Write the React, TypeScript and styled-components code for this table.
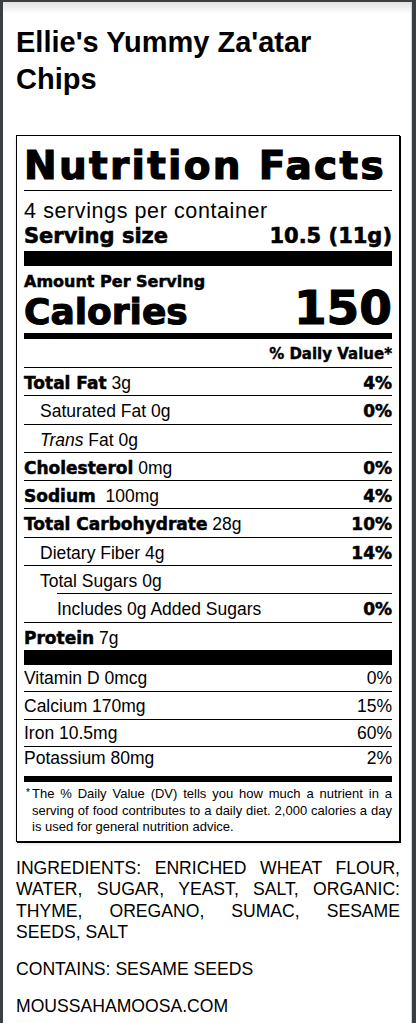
import React from 'react';
import styled, { createGlobalStyle } from 'styled-components';

const heavy = `"DejaVu Sans", "Liberation Sans", Arial, sans-serif`;
const plain = `"Liberation Sans", Arial, Helvetica, sans-serif`;

const GlobalStyle = createGlobalStyle`
  html, body {
    margin: 0;
    padding: 0;
  }
  body {
    background: #3c3f42;
    font-family: ${plain};
    color: #000;
  }
`;

const Sheet = styled.div`
  margin: 2px 4px 0 3px;
  min-height: calc(100vh - 2px);
  box-sizing: border-box;
  padding: 1px 11px 20px 13px;
  background: linear-gradient(#e2e2e2, #fff 12px);
  border-right: 1px solid #d6d6d6;
`;

const ProductTitle = styled.h1`
  margin: 21px 0 0;
  max-width: 330px;
  font-size: 29px;
  line-height: 37px;
  font-weight: 700;
`;

const Label = styled.section`
  margin-top: 37px;
  border: 1px solid #000;
  box-shadow: 1px 1px 0 #000, 0 2px 3px rgba(0, 0, 0, 0.12);
  padding: 0 7px 5px;
`;

const LabelTitle = styled.h2`
  margin: 0;
  padding: 10px 0 5px;
  font-family: ${heavy};
  font-weight: 700;
  font-size: 39px;
  line-height: 39px;
  letter-spacing: 2.3px;
  -webkit-text-stroke: 1.2px #000;
  white-space: nowrap;
  border-bottom: 1px solid #000;
`;

const Servings = styled.div`
  margin-top: 8px;
  font-size: 21.5px;
  line-height: 24px;
  letter-spacing: 0.6px;
`;

const ServingSize = styled.div`
  display: flex;
  justify-content: space-between;
  font-family: ${heavy};
  font-weight: 700;
  font-size: 21px;
  line-height: 26px;
  -webkit-text-stroke: 0.6px #000;
  padding-bottom: 2px;
  border-bottom: 15px solid #000;
`;

const AmountHeading = styled.div`
  margin-top: 7px;
  font-family: ${heavy};
  font-weight: 700;
  font-size: 16px;
  line-height: 18px;
  -webkit-text-stroke: 0.5px #000;
`;

const CaloriesRow = styled.div`
  display: flex;
  justify-content: space-between;
  align-items: baseline;
  font-family: ${heavy};
  font-weight: 700;
  -webkit-text-stroke: 1.1px #000;
  padding-bottom: 4px;
  border-bottom: 6px solid #000;
`;

const CaloriesLabel = styled.span`
  font-size: 36px;
  line-height: 34px;
`;

const CaloriesValue = styled.span`
  font-size: 47px;
  line-height: 34px;
`;

const DailyHeader = styled.div`
  text-align: right;
  font-family: ${heavy};
  font-weight: 700;
  font-size: 15px;
  line-height: 18px;
  -webkit-text-stroke: 0.4px #000;
  padding: 6px 0 4px;
  border-bottom: 1px solid #000;
`;

const Row = styled.div<{ $indent: number; $rule: 'thin' | 'thick' | 'none'; $ruleInset: number }>`
  display: flex;
  justify-content: space-between;
  align-items: baseline;
  box-sizing: border-box;
  padding: 2px 0 0 ${(p) => p.$indent}px;
  min-height: ${(p) => (p.$rule === 'thick' ? 42.3 : 28.3)}px;
  font-size: 17.5px;
  line-height: 26px;
  white-space: pre;
  background-image: ${(p) =>
    p.$rule === 'none' ? 'none' : 'linear-gradient(#000, #000)'};
  background-repeat: no-repeat;
  background-position: right bottom;
  background-size: calc(100% - ${(p) => p.$ruleInset}px)
    ${(p) => (p.$rule === 'thick' ? 15 : 1)}px;
`;

const Nutrient = styled.b`
  font-family: ${heavy};
  font-weight: 700;
  font-size: 17px;
  -webkit-text-stroke: 0.5px #000;
`;

const Percent = styled.span<{ $bold: boolean }>`
  font-family: ${(p) => (p.$bold ? heavy : plain)};
  font-weight: ${(p) => (p.$bold ? 700 : 400)};
  font-size: ${(p) => (p.$bold ? 17 : 17.5)}px;
  -webkit-text-stroke: ${(p) => (p.$bold ? 0.5 : 0)}px #000;
`;

const VitaminRow = styled.div<{ $last: boolean }>`
  display: flex;
  justify-content: space-between;
  align-items: center;
  box-sizing: border-box;
  height: ${(p) => (p.$last ? 35 : 27.5)}px;
  padding-bottom: ${(p) => (p.$last ? 7 : 0)}px;
  font-size: 17.5px;
  line-height: 26px;
  border-bottom: ${(p) => (p.$last ? 6 : 1)}px solid #000;
`;

const Footnote = styled.div`
  display: flex;
  padding-top: 4px;
  font-size: 13px;
  line-height: 16.5px;
`;

const Star = styled.span`
  flex: 0 0 8px;
  padding-left: 2px;
  box-sizing: border-box;
  font-size: 10px;
  line-height: 14px;
`;

const FootText = styled.p`
  margin: 0;
  text-align: justify;
`;

const Info = styled.p`
  margin: 16px 0 0;
  font-size: 17.6px;
  line-height: 21.3px;
  text-align: justify;
`;

type NutrientItem = {
  name: React.ReactNode;
  amount?: string;
  dv?: string;
  bold?: boolean;
  indent?: number;
  rule?: 'thin' | 'thick' | 'none';
  ruleInset?: number;
  gap?: string;
};

const nutrients: NutrientItem[] = [
  { name: 'Total Fat', amount: '3g', dv: '4%', bold: true },
  { name: 'Saturated Fat', amount: '0g', dv: '0%', indent: 16 },
  { name: <><i>Trans</i> Fat</>, amount: '0g', indent: 16 },
  { name: 'Cholesterol', amount: '0mg', dv: '0%', bold: true },
  { name: 'Sodium', amount: '100mg', dv: '4%', bold: true, gap: '  ' },
  { name: 'Total Carbohydrate', amount: '28g', dv: '10%', bold: true },
  { name: 'Dietary Fiber', amount: '4g', dv: '14%', indent: 16 },
  { name: 'Total Sugars', amount: '0g', indent: 16, ruleInset: 33 },
  { name: 'Includes 0g Added Sugars', dv: '0%', indent: 33 },
  { name: 'Protein', amount: '7g', bold: true, rule: 'thick' },
];

const vitamins = [
  { name: 'Vitamin D 0mcg', dv: '0%' },
  { name: 'Calcium 170mg', dv: '15%' },
  { name: 'Iron 10.5mg', dv: '60%' },
  { name: 'Potassium 80mg', dv: '2%' },
];

const App: React.FC = () => {
  return (
    <>
      <GlobalStyle />
      <Sheet>
        <ProductTitle>Ellie's Yummy Za'atar Chips</ProductTitle>

        <Label>
          <LabelTitle>Nutrition Facts</LabelTitle>
          <Servings>4 servings per container</Servings>
          <ServingSize>
            <span>Serving size</span>
            <span>10.5 (11g)</span>
          </ServingSize>

          <AmountHeading>Amount Per Serving</AmountHeading>
          <CaloriesRow>
            <CaloriesLabel>Calories</CaloriesLabel>
            <CaloriesValue>150</CaloriesValue>
          </CaloriesRow>
          <DailyHeader>% Daily Value*</DailyHeader>

          {nutrients.map((n, i) => (
            <Row
              key={i}
              $indent={n.indent ?? 0}
              $rule={n.rule ?? 'thin'}
              $ruleInset={n.ruleInset ?? 0}
            >
              <span>
                {n.bold ? <Nutrient>{n.name}</Nutrient> : n.name}
                {n.amount ? `${n.gap ?? ' '}${n.amount}` : ''}
              </span>
              {n.dv && <Percent $bold>{n.dv}</Percent>}
            </Row>
          ))}

          {vitamins.map((v, i) => (
            <VitaminRow key={v.name} $last={i === vitamins.length - 1}>
              <span>{v.name}</span>
              <Percent $bold={false}>{v.dv}</Percent>
            </VitaminRow>
          ))}

          <Footnote>
            <Star>*</Star>
            <FootText>
              The % Daily Value (DV) tells you how much a nutrient in a serving of
              food contributes to a daily diet. 2,000 calories a day is used for
              general nutrition advice.
            </FootText>
          </Footnote>
        </Label>

        <Info>
          INGREDIENTS: ENRICHED WHEAT FLOUR, WATER, SUGAR, YEAST, SALT, ORGANIC:
          THYME, OREGANO, SUMAC, SESAME SEEDS, SALT
        </Info>
        <Info>CONTAINS: SESAME SEEDS</Info>
        <Info>MOUSSAHAMOOSA.COM</Info>
      </Sheet>
    </>
  );
};

export default App;
